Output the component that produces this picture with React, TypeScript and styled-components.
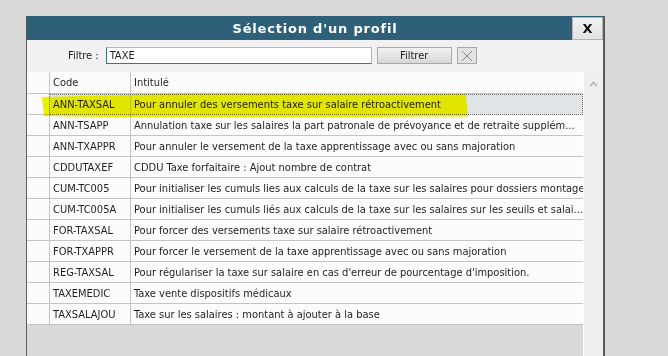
import React from "react";
import styled, { createGlobalStyle } from "styled-components";

const GlobalStyle = createGlobalStyle`
  html, body {
    margin: 0;
    padding: 0;
    background: #d9d9d9;
    overflow: hidden;
    font-family: "DejaVu Sans Condensed", "DejaVu Sans", sans-serif;
    font-stretch: condensed;
    font-size: 11px;
    color: #1e1e1e;
  }
`;

type Profile = { code: string; label: string };

const profiles: Profile[] = [
  { code: "ANN-TAXSAL", label: "Pour annuler des versements taxe sur salaire rétroactivement" },
  { code: "ANN-TSAPP", label: "Annulation taxe sur les salaires la part patronale de prévoyance et de retraite supplém..." },
  { code: "ANN-TXAPPR", label: "Pour annuler le versement de la taxe apprentissage avec ou sans majoration" },
  { code: "CDDUTAXEF", label: "CDDU Taxe forfaitaire : Ajout nombre de contrat" },
  { code: "CUM-TC005", label: "Pour initialiser les cumuls lies aux calculs de la taxe sur les salaires pour dossiers montage" },
  { code: "CUM-TC005A", label: "Pour initialiser les cumuls liés aux calculs de la taxe sur les salaires sur les seuils et salai..." },
  { code: "FOR-TAXSAL", label: "Pour forcer des versements taxe sur salaire rétroactivement" },
  { code: "FOR-TXAPPR", label: "Pour forcer le versement de la taxe apprentissage avec ou sans majoration" },
  { code: "REG-TAXSAL", label: "Pour régulariser la taxe sur salaire en cas d'erreur de pourcentage d'imposition." },
  { code: "TAXEMEDIC", label: "Taxe vente dispositifs médicaux" },
  { code: "TAXSALAJOU", label: "Taxe sur les salaires : montant à ajouter à la base" },
];

// Dialog frame
const Dialog = styled.div`
  box-sizing: border-box;
  margin: 16px 0 0 26px;
  width: 579px;
  height: 340px;
  border-left: 1px solid #5a5a5a;
  border-right: 2px solid #5a5a5a;
  background: #f1f1f1;
  display: flex;
  flex-direction: column;
`;

const TitleBar = styled.div`
  height: 24px;
  background: #2e6179;
  display: flex;
  align-items: stretch;
`;

const Title = styled.div`
  flex: 1;
  padding-left: 31px;
  display: flex;
  align-items: center;
  justify-content: center;
  color: #fff;
  font-family: "DejaVu Sans", sans-serif;
  font-stretch: normal;
  font-weight: bold;
  font-size: 13px;
  letter-spacing: 0.8px;
`;

const CloseButton = styled.div`
  box-sizing: border-box;
  width: 31px;
  margin-top: 1px;
  background: linear-gradient(#f2f2f2, #e2e2e2);
  border: 1px solid #b4b4b4;
  display: flex;
  align-items: center;
  justify-content: center;
  font-family: "DejaVu Sans", sans-serif;
  font-stretch: normal;
  font-weight: bold;
  font-size: 13px;
  color: #111;
`;

// Filter row
const FilterRow = styled.div`
  height: 32px;
  box-sizing: border-box;
  padding: 7px 0 0 41px;
  display: flex;
  align-items: flex-start;
  gap: 5px;
`;

const FilterLabel = styled.span`
  line-height: 17px;
  margin-right: 2px;
`;

const FilterInput = styled.div`
  box-sizing: border-box;
  width: 266px;
  height: 17px;
  background: #fff;
  border: 1px solid #a9bac5;
  border-left-color: #45708a;
  border-bottom-color: #45708a;
  padding-left: 3px;
  line-height: 15px;
`;

const Button = styled.div<{ square?: boolean }>`
  box-sizing: border-box;
  width: ${({ square }) => (square ? "20px" : "75px")};
  height: 17px;
  border: 1px solid #a8a8a8;
  background: ${({ square }) =>
    square ? "#e3e3e3" : "linear-gradient(#f3f3f3, #d6d6d6)"};
  display: flex;
  align-items: center;
  justify-content: center;
  line-height: 15px;
`;

// List
const ListArea = styled.div`
  flex: 1;
  display: flex;
`;

const Grid = styled.div`
  position: relative;
  flex: 1;
  background: #d9d9d9;
`;

const Row = styled.div<{ header?: boolean }>`
  display: grid;
  grid-template-columns: 23px 81px 1fr;
  height: ${({ header }) => (header ? "22px" : "21px")};
  box-sizing: border-box;
  background: #fcfcfc;
  border-bottom: 1px solid #c4c4c4;
`;

const Cell = styled.div<{ divider?: boolean }>`
  box-sizing: border-box;
  padding-left: 3px;
  display: flex;
  align-items: center;
  white-space: nowrap;
  overflow: hidden;
  border-right: ${({ divider }) => (divider ? "1px solid #c4c4c4" : "none")};
`;

const SelectedBox = styled.div`
  grid-column: 2 / 4;
  display: grid;
  grid-template-columns: 81px 1fr;
  margin-left: -1px;
  margin-bottom: -1px;
  border: 1px dotted #6c6c6c;
  background: #e1e5e8;
`;

// marker stroke drawn over the first row
const Highlight = styled.svg`
  position: absolute;
  left: 15px;
  top: 20px;
  mix-blend-mode: darken;
  pointer-events: none;
`;

const ScrollBar = styled.div`
  width: 19px;
  border-left: 1px solid #fff;
  background: #efefef;
  display: flex;
  justify-content: center;
  padding-top: 9px;
`;

export default function App() {
  return (
    <>
      <GlobalStyle />
      <Dialog>
        <TitleBar>
          <Title>Sélection d'un profil</Title>
          <CloseButton>X</CloseButton>
        </TitleBar>

        <FilterRow>
          <FilterLabel>Filtre :</FilterLabel>
          <FilterInput>TAXE</FilterInput>
          <Button>Filtrer</Button>
          <Button square>
            <svg width="12" height="12" viewBox="0 0 12 12">
              <path d="M1 1 L11 11 M11 1 L1 11" stroke="#8a8a8a" strokeWidth="1" fill="none" />
            </svg>
          </Button>
        </FilterRow>

        <ListArea>
          <Grid>
            <Row header>
              <Cell divider />
              <Cell divider>Code</Cell>
              <Cell>Intitulé</Cell>
            </Row>
            {profiles.map((p, i) =>
              i === 0 ? (
                <Row key={p.code}>
                  <Cell divider />
                  <SelectedBox>
                    <Cell divider>{p.code}</Cell>
                    <Cell>{p.label}</Cell>
                  </SelectedBox>
                </Row>
              ) : (
                <Row key={p.code}>
                  <Cell divider />
                  <Cell divider>{p.code}</Cell>
                  <Cell>{p.label}</Cell>
                </Row>
              )
            )}
            <Highlight width="430" height="28" viewBox="0 0 430 28">
              <path
                d="M0 5 L60 3.5 L140 1.5 L260 2 L360 2.5 L424 2 L426 24.5 L380 24.5 L300 25.5 L150 25 L60 25 L2 24 Z"
                fill="#e6f000"
              />
            </Highlight>
          </Grid>
          <ScrollBar>
            <svg width="9" height="6" viewBox="0 0 9 6">
              <path d="M1 5 L4.5 1.5 L8 5" stroke="#b5b5b5" strokeWidth="1.6" fill="none" />
            </svg>
          </ScrollBar>
        </ListArea>
      </Dialog>
    </>
  );
}
